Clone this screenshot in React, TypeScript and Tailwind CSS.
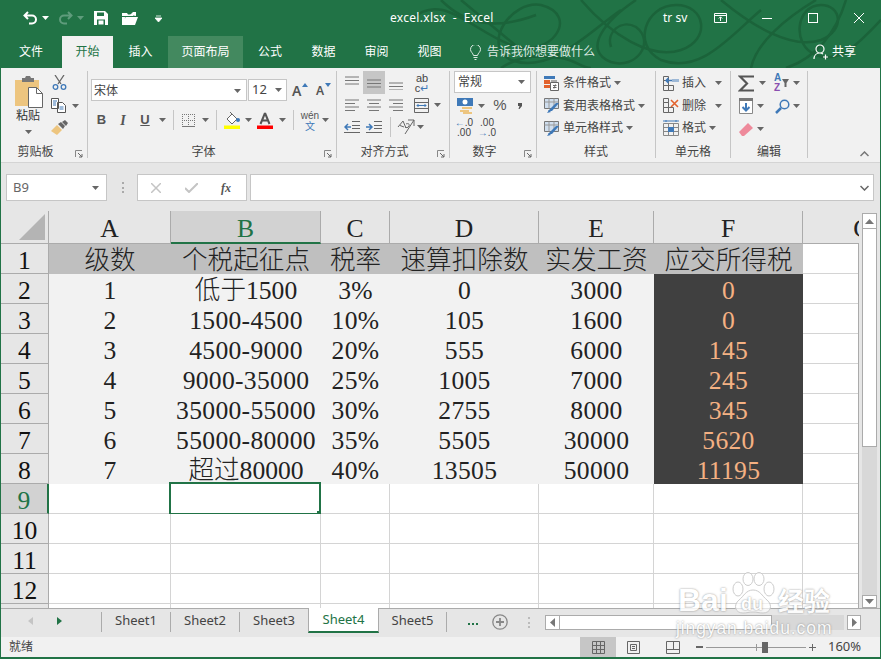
import React from "react";

const GREEN = "#217346";

function Slot({ className = "", children }: { className?: string; children?: React.ReactNode }) {
  return <div className={`flex shrink-0 items-center justify-center ${className}`}>{children}</div>;
}

function Caret({ className = "", color = "#666" }: { className?: string; color?: string }) {
  return (
    <svg width="7" height="4" viewBox="0 0 7 4" className={`shrink-0 ${className}`}>
      <path d="M0 0h7L3.5 4z" fill={color} />
    </svg>
  );
}

function Launcher() {
  return (
    <svg width="8" height="8" viewBox="0 0 8 8" className="absolute bottom-0 right-[4px]">
      <path d="M.5 7V.5H7" fill="none" stroke="#888" />
      <path d="M3 3l4 4M4 7h3V4" fill="none" stroke="#666" />
    </svg>
  );
}

function Sep({ className = "h-[20px]" }: { className?: string }) {
  return <div className={`w-px bg-[#c6c6c6] ${className}`} />;
}

function Lines({ w = [14, 14, 14], align = "left", y = 3 }: { w?: number[]; align?: string; y?: number }) {
  return (
    <svg width="14" height="14" viewBox="0 0 14 14">
      {w.map((l, i) => {
        const x = align === "left" ? 0 : align === "right" ? 14 - l : (14 - l) / 2;
        return <path key={i} d={`M${x} ${y + i * 3.5}h${l}`} stroke="#777" strokeWidth="1" />;
      })}
    </svg>
  );
}

function Swirls() {
  return (
    <svg
      width="470"
      height="68"
      viewBox="0 0 470 68"
      className="absolute right-0 top-0"
      fill="none"
      stroke="#1b633a"
      strokeWidth="2.5"
    >
      <path d="M0 20C30 -10 60 30 100 45s70 -30 30 -40c-30 -5 -60 40 -30 55 40 15 80 -30 110 -50" />
      <path d="M30 0c25 25 55 30 95 15M50 0l60 50" />
      <path d="M170 0c30 35 70 60 100 50 30 -10 25 -45 -5 -45 -30 0 -45 40 -15 55 40 15 70 -25 100 -50" />
      <path d="M225 0c-30 20 -55 50 -25 62 25 8 45 -20 25 -35 -15 -8 -30 5 -25 20" />
      <path d="M310 0c30 25 70 50 100 40 25 -10 20 -35 0 -35 -25 0 -30 40 -5 50 25 10 45 -15 65 -35" />
      <path d="M340 68c5 -25 35 -50 65 -68M375 68c30 -10 50 -35 60 -68" />
      <path d="M90 68c15 -10 30 -14 60 -10 15 2 20 10 30 10" />
    </svg>
  );
}

function TitleBar() {
  return (
    <div className="flex h-[36px] items-center text-white">
      <svg width="15" height="14" viewBox="0 0 15 14" className="ml-[23px]" fill="none" stroke="#fff" strokeWidth="2">
        <path d="M5 1L1.5 4.5 5 8M2 4.5h7a4 4 0 010 8H6" />
      </svg>
      <Caret color="#fff" className="ml-[4px]" />
      <svg width="15" height="14" viewBox="0 0 15 14" className="ml-[9px]" fill="none" stroke="#5f9c7c" strokeWidth="2">
        <path d="M10 1l3.5 3.5L10 8M13 4.5H6a4 4 0 000 8h3" />
      </svg>
      <Caret color="#5f9c7c" className="ml-[4px]" />
      <svg width="14" height="14" viewBox="0 0 14 14" className="ml-[10px]">
        <path d="M0 0h11l3 3v11H0z" fill="#fff" />
        <path d="M3 1.5h7v3.5H3zM3 8.5h8V14H3z" fill={GREEN} />
        <path d="M4.5 9.5h5v4h-5z" fill="#fff" />
      </svg>
      <svg width="16" height="13" viewBox="0 0 16 13" className="ml-[14px]">
        <path d="M0 4V1h5l1 1.5h5V4zM4 0" fill="#fff" />
        <path d="M0 13V5h3l-.5 8zM3.5 5H16l-3 8H1z" fill="#fff" />
        <path d="M8 3l3 -3h3v4z" fill="#fff" />
      </svg>
      <svg width="7" height="7" viewBox="0 0 7 7" className="ml-[17px]">
        <path d="M1 1h5M0 3h7L3.5 7z" stroke="#fff" strokeWidth="0.8" fill="#fff" />
      </svg>
      <div className="ml-[228px] w-[103px] whitespace-nowrap text-[12px] tracking-[0.3px]">excel.xlsx&nbsp; -&nbsp; Excel</div>
      <div className="ml-[170px] w-[25px] whitespace-nowrap text-[12px]">tr sv</div>
      <svg width="13" height="10" viewBox="0 0 13 10" className="ml-[26px]" fill="none" stroke="#fff">
        <path d="M.5.5h12v9H.5zM.5 2.5h12M6.5 8V4M4.8 5.5l1.7-1.7 1.7 1.7" />
      </svg>
      <div className="ml-[35px] h-px w-[10px] bg-white" />
      <div className="ml-[36px] h-[10px] w-[10px] border border-white" />
      <svg width="10" height="10" viewBox="0 0 10 10" className="ml-[36px]" stroke="#fff">
        <path d="M0 0l10 10M10 0L0 10" />
      </svg>
    </div>
  );
}

function TabsBar() {
  const tabs = [
    { t: "文件", c: "w-[62px]" },
    { t: "开始", c: "w-[51px] bg-[#f1f1f1] text-[#217346]" },
    { t: "插入", c: "w-[55px]" },
    { t: "页面布局", c: "w-[75px] bg-[#43895f]" },
    { t: "公式", c: "w-[54px]" },
    { t: "数据", c: "w-[53px]" },
    { t: "审阅", c: "w-[53px]" },
    { t: "视图", c: "w-[53px]" },
  ];
  return (
    <div className="flex h-[32px] items-center text-[12px] text-white">
      {tabs.map((x) => (
        <div key={x.t} className={`flex h-full items-center justify-center ${x.c}`}>
          {x.t}
        </div>
      ))}
      <svg width="11" height="15" viewBox="0 0 11 15" className="ml-[14px]" fill="none" stroke="#dfeae4">
        <path d="M3.5 10.5C3 8 .5 7 .5 4.5a5 5 0 0110 0C10.500 7 8 8 7.500 10.500zM3.500 12.500h4M4.500 14.500h2" />
      </svg>
      <div className="ml-[6px] w-[110px] whitespace-nowrap text-[#dfeae4]">告诉我你想要做什么</div>
      <svg width="16" height="16" viewBox="0 0 16 16" className="ml-[216px]" fill="none" stroke="#fff" strokeWidth="1.2">
        <path d="M7 9a4 4 0 100-8 4 4 0 000 8zM1 15c0-3 2-6 6-6 1 0 2 .3 3 1M10 13h5M12.500 10.500v5" />
      </svg>
      <div className="ml-[3px] whitespace-nowrap">共享</div>
    </div>
  );
}

function Group({
  className,
  label,
  launcher,
  children,
}: {
  className: string;
  label: string;
  launcher?: boolean;
  children: React.ReactNode;
}) {
  return (
    <div className={`relative flex h-[87px] shrink-0 flex-col border-r border-[#c6c6c6] ${className}`}>
      <div className="h-[74px]">{children}</div>
      <div className={`text-center text-[12px] leading-[13px] text-[#444] ${launcher ? "pr-[17px]" : ""}`}>{label}</div>
      {launcher && <Launcher />}
    </div>
  );
}

function ClipboardGroup() {
  return (
    <Group className="w-[87px]" label="剪贴板" launcher>
      <div className="flex">
        <div className="ml-[12px] flex w-[30px] flex-col items-center">
          <svg width="29" height="32" viewBox="0 0 29 32" className="mt-[5px]">
            <path d="M1 4h24v26H1z" fill="#edc57f" />
            <path d="M8 2h3l1-2h4l1 2h3v4H8z" fill="#777" />
            <path d="M14.500 11.500h8l6 6v14h-14z" fill="#fff" stroke="#666" />
            <path d="M22.500 11.500v6h6" fill="none" stroke="#666" />
          </svg>
          <div className="mt-[-1px] whitespace-nowrap text-[12px] leading-[18px] text-[#333]">粘贴</div>
          <Caret className="mt-[5px]" />
        </div>
        <div className="ml-[8px] flex flex-col">
          <svg width="15" height="15" viewBox="0 0 15 15" className="mt-[4px] ml-[1px]" fill="none">
            <path d="M3 0l6 9M12 0L6 9" stroke="#666" strokeWidth="1.300" />
            <circle cx="3.500" cy="12" r="2.300" stroke="#3f79b8" strokeWidth="1.300" />
            <circle cx="11.500" cy="12" r="2.300" stroke="#3f79b8" strokeWidth="1.300" />
          </svg>
          <div className="mt-[8px] flex items-center">
            <svg width="15" height="15" viewBox="0 0 15 15" fill="#fff" stroke="#555">
              <path d="M.5.5h7v10h-7zM6.500 4.500h5l3 3v7h-8z" />
              <path d="M2 3h4M2 5h3M2 7h3M8.500 9h4M8.500 11h4" stroke="#3f79b8" />
            </svg>
            <Caret className="ml-[6px]" />
          </div>
          <svg width="17" height="15" viewBox="0 0 17 15" className="mt-[7px]">
            <path d="M0 11l6-6 5 5-5 5z" fill="#edc57f" />
            <path d="M7 4l3-2 4 4-2 3z" fill="#666" />
            <path d="M11 2l3-2 3 3-2 3z" fill="#666" />
          </svg>
        </div>
      </div>
    </Group>
  );
}

function FontGroup() {
  return (
    <Group className="w-[249px]" label="字体" launcher>
      <div className="ml-[3px] mt-[8px] flex items-center">
        <div className="flex h-[22px] w-[156px] items-center justify-between border border-[#c6c6c6] bg-white pl-[2px] pr-[5px] pt-px text-[12px] text-[#444]">
          宋体
          <Caret />
        </div>
        <div className="ml-px flex h-[22px] w-[39px] items-center justify-between border border-[#c6c6c6] bg-white pl-[3px] pr-[4px] text-[13px] text-[#444]">
          12
          <Caret />
        </div>
        <div className="ml-[5px] flex h-[16px] w-[16px] items-start text-[14px] font-semibold leading-[18px] text-[#555]">
          A<span className="ml-px mt-px h-0 w-0 border-x-[3px] border-b-[4px] border-x-transparent border-b-[#3f79b8]" />
        </div>
        <div className="ml-[8px] flex h-[16px] w-[16px] items-start text-[12px] font-semibold leading-[18px] text-[#555]">
          A<span className="ml-px mt-px h-0 w-0 border-x-[3px] border-t-[4px] border-x-transparent border-t-[#3f79b8]" />
        </div>
      </div>
      <div className="ml-[3px] mt-[8px] flex h-[22px] items-center text-[#555]">
        <Slot className="w-[21px] font-['Liberation_Sans'] text-[13px] font-bold">B</Slot>
        <Slot className="w-[22px] font-['Liberation_Serif'] text-[14px] font-bold italic">I</Slot>
        <Slot className="w-[22px] font-['Liberation_Sans'] text-[13px] font-bold underline">U</Slot>
        <Slot className="w-[12px]"><Caret /></Slot>
        <Slot className="w-[10px]"><Sep /></Slot>
        <Slot className="w-[21px]">
          <svg width="13" height="13" viewBox="0 0 13 13" stroke="#777" strokeDasharray="1 1">
            <path d="M.5 0v13M6.500 0v13M12.500 0v13M0 .5h13M0 6.500h13" fill="none" />
            <path d="M0 12.500h13" strokeDasharray="none" />
          </svg>
        </Slot>
        <Slot className="w-[12px]"><Caret /></Slot>
        <Slot className="w-[10px]"><Sep /></Slot>
        <Slot className="w-[22px]">
          <svg width="16" height="17" viewBox="0 0 16 17">
            <path d="M3 7l5-5 5 5-5 5z" fill="#fff" stroke="#666" />
            <path d="M6 0l5 5" stroke="#666" />
            <circle cx="14" cy="8" r="2" fill="#3f79b8" />
            <path d="M0 13.500h16V17H0z" fill="#ffff00" />
          </svg>
        </Slot>
        <Slot className="w-[10px]"><Caret /></Slot>
        <Slot className="w-[24px]">
          <svg width="16" height="17" viewBox="0 0 16 17">
            <path d="M8 1L3.500 12M8 1l4.500 11M5 8.500h6" fill="none" stroke="#555" strokeWidth="2" />
            <path d="M0 13.500h16V17H0z" fill="#ff0000" />
          </svg>
        </Slot>
        <Slot className="w-[10px]"><Caret /></Slot>
        <Slot className="w-[12px]"><Sep /></Slot>
        <Slot className="w-[22px] flex-col">
          <span className="font-['Liberation_Sans'] text-[10px] leading-[11px] text-[#555]">wén</span>
          <span className="text-[10px] leading-[10px] text-[#3f79b8]">文</span>
        </Slot>
        <Slot className="w-[8px]"><Caret /></Slot>
      </div>
    </Group>
  );
}

function AlignGroup() {
  return (
    <Group className="w-[113px]" label="对齐方式" launcher>
      <div className="ml-[4px] flex h-[23px] items-center">
        <Slot className="h-[23px] w-[22px]"><Lines y={1} /></Slot>
        <Slot className="h-[23px] w-[22px] bg-[#c6c6c6]"><Lines y={4} /></Slot>
        <Slot className="h-[23px] w-[22px]"><Lines y={7} /></Slot>
        <div className="ml-[4px] flex w-[22px] flex-col items-center text-[#444]">
          <span className="font-['Liberation_Sans'] text-[11px] leading-[10px]">ab</span>
          <span className="font-['Liberation_Sans'] text-[11px] leading-[10px]">
            c<span className="text-[#3f79b8]">↵</span>
          </span>
        </div>
      </div>
      <div className="ml-[4px] flex h-[22px] items-center">
        <Slot className="w-[22px]"><Lines w={[14, 10, 14, 10]} y={2} /></Slot>
        <Slot className="w-[22px]"><Lines w={[14, 10, 14, 10]} align="center" y={2} /></Slot>
        <Slot className="w-[22px]"><Lines w={[14, 10, 14, 10]} align="right" y={2} /></Slot>
        <Slot className="ml-[3px] w-[22px]">
          <svg width="15" height="15" viewBox="0 0 15 15" fill="none">
            <path d="M.5.5h14v14H.5zM.5 4.500h14M.5 10.500h14" stroke="#666" />
            <path d="M3 7.500h9M4.500 6L3 7.500 4.500 9M10.500 6L12 7.500 10.500 9" stroke="#3f79b8" />
          </svg>
        </Slot>
        <Slot className="w-[10px]"><Caret /></Slot>
      </div>
      <div className="ml-[4px] flex h-[22px] items-center">
        <Slot className="w-[22px]">
          <svg width="16" height="12" viewBox="0 0 16 12" stroke="#666">
            <path d="M8 .5h8M8 4.500h8M8 7.500h8M0 11.500h16" />
            <path d="M7 6H1M4 3L1 6l3 3" fill="none" stroke="#3f79b8" strokeWidth="1.500" />
          </svg>
        </Slot>
        <Slot className="w-[22px]">
          <svg width="16" height="12" viewBox="0 0 16 12" stroke="#666">
            <path d="M8 .5h8M8 4.500h8M8 7.500h8M0 11.500h16" />
            <path d="M0 6h6M3 3l3 3-3 3" fill="none" stroke="#3f79b8" strokeWidth="1.500" />
          </svg>
        </Slot>
        <Slot className="w-[10px]"><Sep /></Slot>
        <Slot className="w-[22px]">
          <svg width="18" height="16" viewBox="0 0 18 16" fill="none" stroke="#666">
            <path d="M1 8l5-6 3 7M3 6.500l4 1.500M9 5c2-1 4 0 3 2s-3 2-4 1M11 1l6 0M17 1v6M17 1L8 15" />
          </svg>
        </Slot>
        <Slot className="w-[6px]"><Caret /></Slot>
      </div>
    </Group>
  );
}

function NumberGroup() {
  return (
    <Group className="w-[87px]" label="数字" launcher>
      <div className="ml-[4px] flex h-[22px] w-[77px] items-center justify-between border border-[#c6c6c6] bg-white pl-[3px] pr-[5px] text-[12px] text-[#444]">
        常规
        <Caret />
      </div>
      <div className="ml-[4px] mt-px flex h-[23px] items-center">
        <Slot className="w-[22px]">
          <svg width="16" height="16" viewBox="0 0 16 16">
            <path d="M0 0h16v8H0z" fill="#3f79b8" />
            <circle cx="8" cy="4" r="2.500" fill="#fff" />
            <path d="M5 9h10v2H5zM3 12h9v2H3zM6 14h9v2H6z" fill="#edc57f" />
          </svg>
        </Slot>
        <Slot className="w-[10px]"><Caret /></Slot>
        <Slot className="ml-[3px] w-[22px] font-['Liberation_Sans'] text-[15px] text-[#555]">%</Slot>
        <Slot className="w-[18px]">
          <svg width="4" height="6" viewBox="0 0 4 6"><path d="M0 0h4v3L1.500 6H.5l1-3H0z" fill="#555" /></svg>
        </Slot>
      </div>
      <div className="ml-[3px] flex h-[21px] items-center">
        <Slot className="w-[22px] flex-col font-['Liberation_Sans'] text-[10px] leading-[10px] text-[#444]">
          <span><span className="text-[#3f79b8]">←</span>.0</span>
          <span>.00</span>
        </Slot>
        <Slot className="ml-px w-[22px] flex-col font-['Liberation_Sans'] text-[10px] leading-[10px] text-[#444]">
          <span>.00</span>
          <span><span className="text-[#3f79b8]">→</span>.0</span>
        </Slot>
      </div>
    </Group>
  );
}

function StyleIcon({ first }: { first?: boolean }) {
  if (first) {
    return (
      <svg width="15" height="15" viewBox="0 0 15 15">
        <path d="M0 0h11v3H0z" fill="#3f79b8" />
        <path d="M0 4h6v4H0zM0 9h6v3H0z" fill="#e2622d" />
        <path d="M7 4h6v2H7z" fill="#aaa" />
        <path d="M6.500 6.500h8v8h-8z" fill="#fff" stroke="#666" />
        <path d="M9 9.500h3.500M9 11.500h3.500M11.500 8.500L10 12.500" stroke="#666" fill="none" />
      </svg>
    );
  }
  return (
    <svg width="15" height="15" viewBox="0 0 15 15">
      <path d="M.5.5h14v10H.5z" fill="#cfdeee" stroke="#777" />
      <path d="M.5 4h14M5 .5v10M10 .5v10" stroke="#999" />
      <path d="M4 13l8-8 3 0-7 8z" fill="#3f79b8" />
      <path d="M3 15l2-3 2 2z" fill="#3f79b8" />
    </svg>
  );
}

function StylesGroup() {
  const rows = [
    { t: "条件格式", first: true },
    { t: "套用表格格式" },
    { t: "单元格样式" },
  ];
  return (
    <Group className="w-[119px]" label="样式">
      <div className="mt-px">
        {rows.map((r) => (
          <div key={r.t} className="ml-[7px] flex h-[22.5px] items-center whitespace-nowrap text-[12px] text-[#444]">
            <StyleIcon first={r.first} />
            <span className="ml-[4px]">{r.t}</span>
            <Caret className="ml-[3px]" />
          </div>
        ))}
      </div>
    </Group>
  );
}

function CellIcon({ kind }: { kind: string }) {
  const grid = "M.5 4.500h5v5h-5zM.5 9.500h5v5h-5zM5.500 9.500h5v5h-5zM.5.5h5v4h-5z";
  if (kind === "ins") {
    return (
      <svg width="16" height="15" viewBox="0 0 16 15" fill="none">
        <path d={grid} stroke="#666" />
        <path d="M9 3h7v3H9z" fill="#9db8d6" />
        <path d="M9 4.500H3M5.500 2L3 4.500 5.500 7" stroke="#3f79b8" strokeWidth="1.500" />
      </svg>
    );
  }
  if (kind === "del") {
    return (
      <svg width="16" height="15" viewBox="0 0 16 15" fill="none">
        <path d={grid} stroke="#666" />
        <path d="M8 2l7 7M15 2L8 9" stroke="#e2622d" strokeWidth="1.600" />
      </svg>
    );
  }
  return (
    <svg width="16" height="16" viewBox="0 0 16 16" fill="none">
      <path d="M.5 3.500h15v12H.5zM.5 7.500h15M.5 11.500h15M5.500 3.500v12M10.500 3.500v12" stroke="#888" />
      <path d="M5 7h6v5H5z" fill="#3f79b8" />
      <path d="M0 1h16M3 0v2M13 0v2" stroke="#3f79b8" />
    </svg>
  );
}

function CellsGroup() {
  const rows = [
    { t: "插入", k: "ins", c: "ml-[9px]" },
    { t: "删除", k: "del", c: "ml-[9px]" },
    { t: "格式", k: "fmt", c: "ml-[3px]" },
  ];
  return (
    <Group className="w-[75px]" label="单元格">
      <div className="mt-px">
        {rows.map((r) => (
          <div key={r.t} className="ml-[7px] flex h-[22.500px] items-center text-[12px] text-[#444]">
            <CellIcon kind={r.k} />
            <span className="ml-[3px]">{r.t}</span>
            <Caret className={r.c} />
          </div>
        ))}
      </div>
    </Group>
  );
}

function EditGroup() {
  return (
    <Group className="w-[77px]" label="编辑">
      <div className="ml-[7px] mt-[1px] flex h-[22px] items-center">
        <svg width="16" height="17" viewBox="0 0 16 17" fill="none" stroke="#555" strokeWidth="2.200">
          <path d="M16 1.500H2L9 8.500 2 15.500h14" />
        </svg>
        <Caret className="ml-[5px]" />
        <div className="ml-[8px] flex w-[16px] items-center">
          <div className="flex flex-col font-['Liberation_Sans'] text-[10px] font-bold leading-[10px]">
            <span className="text-[#3f79b8]">A</span>
            <span className="text-[#8a4fb0]">Z</span>
          </div>
          <svg width="7" height="8" viewBox="0 0 7 8" className="ml-px">
            <path d="M0 0h7L4.500 4v4h-2V4z" fill="#666" />
          </svg>
        </div>
        <Caret className="ml-[3px]" />
      </div>
      <div className="ml-[8px] mt-px flex h-[22px] items-center">
        <svg width="14" height="16" viewBox="0 0 14 16">
          <path d="M.5.5h13v15H.5z" fill="#fff" stroke="#888" />
          <path d="M0 0h14v3H0z" fill="#777" />
          <path d="M7 5v7M3.500 9L7 12.500 10.500 9" fill="none" stroke="#3f79b8" strokeWidth="2" />
        </svg>
        <Caret className="ml-[4px]" />
        <svg width="15" height="15" viewBox="0 0 15 15" className="ml-[11px]" fill="none" stroke="#3f79b8">
          <circle cx="9.500" cy="5.500" r="4.300" strokeWidth="1.500" />
          <path d="M6 9l-5 5" strokeWidth="2.500" />
        </svg>
        <Caret className="ml-[3px]" />
      </div>
      <div className="ml-[8px] mt-px flex h-[22px] items-center">
        <svg width="14" height="14" viewBox="0 0 14 14">
          <path d="M0 10L9 1l5 5-9 8H3z" fill="#ee8a9b" />
        </svg>
        <Caret className="ml-[4px]" />
      </div>
    </Group>
  );
}

function Ribbon() {
  return (
    <div className="relative mx-px flex h-[95px] border-b border-[#d4d4d4] bg-[#f1f1f1] pt-[3px]">
      <ClipboardGroup />
      <FontGroup />
      <AlignGroup />
      <NumberGroup />
      <StylesGroup />
      <CellsGroup />
      <EditGroup />
      <svg width="9" height="6" viewBox="0 0 9 6" className="absolute bottom-[5px] right-[11px]" fill="none" stroke="#777" strokeWidth="1.500">
        <path d="M.5 5L4.500 1 8.500 5" />
      </svg>
    </div>
  );
}

function FormulaBar() {
  return (
    <div className="mx-px flex h-[48px] items-start bg-[#e6e6e6] pt-[11px] text-[#666]">
      <div className="ml-[5px] flex h-[27px] w-[101px] items-center justify-between border border-[#c6c6c6] bg-white pl-[6px] pr-[7px] text-[13px]">
        B9
        <Caret />
      </div>
      <div className="ml-[15px] mt-[8px] flex h-[11px] w-px flex-col justify-between">
        <div className="h-[2px] w-[2px] bg-[#aaa]" />
        <div className="h-[2px] w-[2px] bg-[#aaa]" />
        <div className="h-[2px] w-[2px] bg-[#aaa]" />
      </div>
      <div className="ml-[14px] flex h-[27px] w-[110px] items-center border border-[#c6c6c6] bg-white">
        <svg width="10" height="10" viewBox="0 0 10 10" className="ml-[13px]" stroke="#c4c4c4" strokeWidth="1.500">
          <path d="M0 0l10 10M10 0L0 10" />
        </svg>
        <svg width="13" height="10" viewBox="0 0 13 10" className="ml-[24px]" stroke="#c4c4c4" strokeWidth="2" fill="none">
          <path d="M0 5l4 4 9-9" />
        </svg>
        <span className="ml-[23px] font-['Liberation_Serif'] text-[12px] font-bold italic text-[#555]">fx</span>
      </div>
      <div className="ml-[3px] flex h-[27px] w-[624px] items-center justify-end border border-[#c6c6c6] bg-white pr-[4px]">
        <svg width="9" height="6" viewBox="0 0 9 6" fill="none" stroke="#666" strokeWidth="1.500">
          <path d="M.5 1l4 4 4-4" />
        </svg>
      </div>
    </div>
  );
}

const GRID = "grid grid-cols-[48px_122px_150px_69px_149px_115px_149px_120px]";

const HEAD = ["A", "B", "C", "D", "E", "F", "G"];

const DATA: string[][] = [
  ["级数", "个税起征点", "税率", "速算扣除数", "实发工资", "应交所得税"],
  ["1", "低于1500", "3%", "0", "3000", "0"],
  ["2", "1500-4500", "10%", "105", "1600", "0"],
  ["3", "4500-9000", "20%", "555", "6000", "145"],
  ["4", "9000-35000", "25%", "1005", "7000", "245"],
  ["5", "35000-55000", "30%", "2755", "8000", "345"],
  ["6", "55000-80000", "35%", "5505", "30000", "5620"],
  ["7", "超过80000", "40%", "13505", "50000", "11195"],
];

function HeaderRow() {
  return (
    <div className={`${GRID} h-[33px] grid-rows-[33px] text-[25.6px] font-light leading-[36px]`}>
      <div className="relative border-b border-r border-[#ababab] bg-[#e6e6e6]">
        <svg width="26" height="26" viewBox="0 0 26 26" className="absolute bottom-[3px] right-[3px]">
          <path d="M26 0v26H0z" fill="#b4b4b4" />
        </svg>
      </div>
      {HEAD.map((h) =>
        h === "B" ? (
          <div key={h} className="border-b-2 border-r border-b-[#217346] border-r-[#ababab] bg-[#d2d2d2] text-center text-[#217346]">
            {h}
          </div>
        ) : (
          <div key={h} className="border-b border-r border-[#ababab] bg-[#e6e6e6] text-center text-[#222]">
            {h}
          </div>
        )
      )}
    </div>
  );
}

function DataRow({ n, cells }: { n: number; cells: string[] }) {
  const head = n === 1;
  return (
    <div className={`${GRID} h-[30px] grid-rows-[30px] text-[25.6px] font-light leading-[34px]`}>
      <div className="border-b border-r border-[#ababab] bg-[#e6e6e6] text-center text-[#111]">{n}</div>
      {cells.map((c, i) => {
        const dark = i === 5 && !head;
        const bg = head ? "bg-[#bfbfbf] text-[#222]" : dark ? "bg-[#404040] text-[#f4b183]" : "bg-[#f2f2f2] text-[#222]";
        const track = /^[\d%-]+$/.test(c) ? "tracking-[0.3px]" : "";
        return (
          <div key={i} className={`whitespace-nowrap text-center ${bg} ${track}`}>
            {c}
          </div>
        );
      })}
      <div className="border-b border-[#d4d4d4] bg-white" />
    </div>
  );
}

function EmptyRow({ n }: { n: number }) {
  const active = n === 9;
  return (
    <div className={`${GRID} h-[30px] grid-rows-[30px] text-[25.6px] leading-[34px]`}>
      {active ? (
        <div className="border-b border-r-2 border-b-[#ababab] border-r-[#217346] bg-[#d2d2d2] text-center text-[#217346]">{n}</div>
      ) : (
        <div className="border-b border-r border-[#ababab] bg-[#e6e6e6] text-center text-[#111]">{n}</div>
      )}
      {HEAD.map((h, i) => (
        <div key={h} className={`relative bg-white ${i < 6 ? "border-r" : ""} border-b border-[#d4d4d4]`}>
          {active && h === "B" && (
            <div className="absolute -left-[2px] -top-[2px] h-[33px] w-[152px] border-2 border-[#217346]">
              <div className="absolute -bottom-[3px] -right-[3px] h-[5px] w-[5px] bg-[#217346]" />
            </div>
          )}
        </div>
      ))}
    </div>
  );
}

function VerticalScroll() {
  return (
    <div className="flex h-[397px] w-[21px] shrink-0 flex-col items-center bg-[#e6e6e6] pt-[2px]">
      <div className="flex h-[16px] w-[15px] items-center justify-center border border-[#ababab] bg-white">
        <svg width="9" height="5" viewBox="0 0 9 5"><path d="M4.500 0L9 5H0z" fill="#777" /></svg>
      </div>
      <div className="h-[218px] w-[15px] border border-t-0 border-[#ababab] bg-white" />
      <div className="w-[15px] flex-1 bg-[#d8d8d8]" />
      <div className="flex h-[13px] w-[15px] items-center justify-center border border-[#ababab] bg-white">
        <svg width="9" height="5" viewBox="0 0 9 5"><path d="M0 0h9L4.500 5z" fill="#777" /></svg>
      </div>
    </div>
  );
}

function Sheet() {
  return (
    <div className="mx-px flex h-[397px] font-['Liberation_Serif','Noto_Sans_CJK_SC',serif]">
      <div className="relative h-[397px] w-[858px] shrink-0 overflow-hidden bg-white">
        <HeaderRow />
        {DATA.map((cells, i) => (
          <DataRow key={i} n={i + 1} cells={cells} />
        ))}
        {[9, 10, 11, 12, 13].map((n) => (
          <EmptyRow key={n} n={n} />
        ))}
        <div className="absolute bottom-0 right-0 top-[32px] w-px bg-[#ababab]" />
      </div>
      <VerticalScroll />
    </div>
  );
}

function SheetTabs() {
  const tabSep = "h-[20px] w-px bg-[#ababab]";
  return (
    <div className="mx-px flex h-[29px] items-start border-t border-[#ababab] bg-[#e6e6e6] text-[13px] text-[#444]">
      <svg width="5" height="8" viewBox="0 0 5 8" className="ml-[27px] mt-[8px]"><path d="M5 0v8L0 4z" fill="#c4c4c4" /></svg>
      <svg width="5" height="8" viewBox="0 0 5 8" className="ml-[24px] mt-[8px]"><path d="M0 0v8l5-4z" fill={GREEN} /></svg>
      <div className={`ml-[39px] mt-[3px] ${tabSep}`} />
      {["Sheet1", "Sheet2", "Sheet3"].map((s) => (
        <React.Fragment key={s}>
          <div className="flex h-[24px] w-[68px] items-center justify-center">{s}</div>
          <div className={`mt-[3px] ${tabSep}`} />
        </React.Fragment>
      ))}
      <div className="-mt-px ml-[-1px] flex h-[25px] w-[71px] items-center justify-center border-x border-b-2 border-x-[#ababab] border-b-[#217346] bg-white text-[#217346]">
        Sheet4
      </div>
      <div className="flex h-[24px] w-[67px] items-center justify-center">Sheet5</div>
      <div className={`mt-[3px] ${tabSep}`} />
      <div className="ml-[21px] mt-[14px] flex gap-[2px]">
        <div className="h-[2px] w-[2px] bg-[#217346]" />
        <div className="h-[2px] w-[2px] bg-[#217346]" />
        <div className="h-[2px] w-[2px] bg-[#217346]" />
      </div>
      <svg width="16" height="16" viewBox="0 0 16 16" className="ml-[14px] mt-[5px]" fill="none" stroke="#888" strokeWidth="1.300">
        <circle cx="8" cy="8" r="7.200" />
        <path d="M4 8h8M8 4v8" strokeWidth="1.800" />
      </svg>
      <div className="ml-[20px] mt-[8px] flex h-[11px] flex-col justify-between">
        <div className="h-[2px] w-[2px] bg-[#bbb]" />
        <div className="h-[2px] w-[2px] bg-[#bbb]" />
        <div className="h-[2px] w-[2px] bg-[#bbb]" />
      </div>
      <div className="ml-[15px] mt-[6px] flex h-[15px] w-[316px]">
        <div className="flex w-[15px] items-center justify-center border border-[#ababab] bg-white">
          <svg width="5" height="9" viewBox="0 0 5 9"><path d="M5 0v9L0 4.500z" fill="#777" /></svg>
        </div>
        <div className="w-[212px] border-y border-r border-[#ababab] bg-white" />
        <div className="w-[72px] bg-[#d8d8d8]" />
        <div className="ml-[3px] flex w-[14px] items-center justify-center border border-[#ababab] bg-white">
          <svg width="5" height="9" viewBox="0 0 5 9"><path d="M0 0v9l5-4.500z" fill="#777" /></svg>
        </div>
      </div>
    </div>
  );
}

function StatusBar() {
  return (
    <div className="mx-px flex h-[20px] items-center bg-[#f1f1f1] text-[12px] text-[#444]">
      <span className="ml-[8px] w-[571px]">就绪</span>
      <div className="flex h-full w-[36px] items-center justify-center bg-[#c6c6c6]">
        <svg width="13" height="13" viewBox="0 0 13 13" fill="none" stroke="#666">
          <path d="M.5.5h12v12H.5zM4.500.5v12M8.500.5v12M.5 4.500h12M.5 8.500h12" />
        </svg>
      </div>
      <svg width="13" height="13" viewBox="0 0 13 13" className="ml-[11px]" fill="none" stroke="#666">
        <path d="M.5.5h12v12H.5zM3.500 3.500h6v6h-6zM5 5.500h3M5 7.500h3" />
      </svg>
      <svg width="14" height="13" viewBox="0 0 14 13" className="ml-[26px]" fill="none" stroke="#666">
        <path d="M.5.5h13v12H.5zM.5 8.500h13M7.500.5v8" />
      </svg>
      <div className="ml-[16px] h-[2px] w-[7px] bg-[#666]" />
      <div className="relative ml-[3px] h-px w-[100px] bg-[#999]">
        <div className="absolute left-[50px] top-[-3px] h-[7px] w-px bg-[#999]" />
        <div className="absolute left-[56px] top-[-5px] h-[11px] w-[6px] bg-[#666]" />
      </div>
      <div className="relative ml-[3px] h-[7px] w-[7px]">
        <div className="absolute left-0 top-[3px] h-px w-[7px] bg-[#666]" />
        <div className="absolute left-[3px] top-0 h-[7px] w-px bg-[#666]" />
      </div>
      <span className="ml-[12px] whitespace-nowrap text-[13px]">160%</span>
    </div>
  );
}

function Watermark() {
  return (
    <div className="pointer-events-none absolute left-[676px] top-[572px] h-[66px] w-[160px] text-white [text-shadow:0_0_2px_#777]">
      <span className="absolute left-[2px] top-[7px] font-['Liberation_Sans'] text-[32px] font-bold leading-[42px] opacity-85">Bai</span>
      <svg width="50" height="48" viewBox="0 0 50 48" className="absolute left-[52px] top-0 opacity-90" fill="#fff" fillOpacity="0.75" stroke="#c8c8c8" strokeWidth="1">
        <ellipse cx="10" cy="17" rx="5" ry="7" />
        <ellipse cx="20" cy="7" rx="5" ry="6.500" />
        <ellipse cx="31" cy="7" rx="5" ry="6.500" />
        <ellipse cx="41" cy="17" rx="5" ry="7" />
        <path d="M25 18c-7 0-9 6-14 10-6 5-4 13 4 13 4 0 6-1 10-1s6 1 10 1c8 0 10-8 4-13-5-4-7-10-14-10z" />
      </svg>
      <span className="absolute left-[65px] top-[22px] font-['Liberation_Sans'] text-[18px] font-bold leading-[20px] opacity-85">du</span>
      <span className="absolute left-[102px] top-[14px] whitespace-nowrap text-[26px] font-bold leading-[30px] opacity-85">经验</span>
      <span className="absolute left-0 top-[46px] whitespace-nowrap font-['Liberation_Sans'] text-[17.500px] leading-[20px] tracking-[0.9px] opacity-85">jingyan.baidu.com</span>
    </div>
  );
}

export default function App() {
  return (
    <div className="relative h-[659px] w-[881px] overflow-hidden bg-[#217346] font-['Noto_Sans','Noto_Sans_CJK_SC',sans-serif]">
      <Swirls />
      <div className="relative">
        <TitleBar />
        <TabsBar />
      </div>
      <Ribbon />
      <FormulaBar />
      <Sheet />
      <SheetTabs />
      <StatusBar />
      <Watermark />
    </div>
  );
}
